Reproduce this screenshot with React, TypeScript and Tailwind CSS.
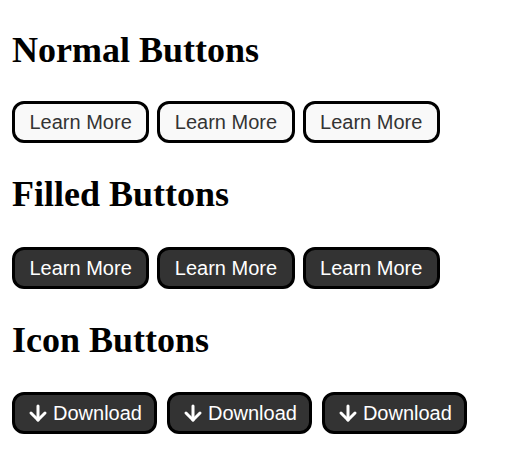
import { ArrowDown } from "lucide-react";

const serif = { fontFamily: '"Liberation Serif", "Times New Roman", serif' };

function OutlineButton({ label }: { label: string }) {
  return (
    <button className="rounded-[12px] border-[3px] border-black bg-[#f9f9f9] px-[14.5px] py-[6.5px] font-['Liberation_Sans',Arial,sans-serif] text-[20px] leading-[23px] text-[#333]">
      {label}
    </button>
  );
}

function FilledButton({ label }: { label: string }) {
  return (
    <button className="rounded-[12px] border-[3px] border-black bg-[#333] px-[14.5px] py-[6.5px] font-['Liberation_Sans',Arial,sans-serif] text-[20px] leading-[23px] text-white">
      {label}
    </button>
  );
}

function IconButton({ label }: { label: string }) {
  return (
    <button className="flex items-center gap-[3px] rounded-[12px] border-[3px] border-black bg-[#333] py-[6.5px] pl-[11px] pr-3 font-['Liberation_Sans',Arial,sans-serif] text-[20px] leading-[23px] text-white">
      <ArrowDown size={24} strokeWidth={3} className="-my-px" />
      {label}
    </button>
  );
}

export default function App() {
  const items = [1, 2, 3];

  return (
    <div className="min-h-screen bg-white px-3 pt-[30px]">
      <h2 style={serif} className="text-[36px] font-bold leading-[41px] text-black">
        Normal Buttons
      </h2>
      <div className="mt-[30px] flex gap-[8px]">
        {items.map((i) => (
          <OutlineButton key={i} label="Learn More" />
        ))}
      </div>

      <h2 style={serif} className="mt-[31px] text-[36px] font-bold leading-[41px] text-black">
        Filled Buttons
      </h2>
      <div className="mt-[32px] flex gap-[8px]">
        {items.map((i) => (
          <FilledButton key={i} label="Learn More" />
        ))}
      </div>

      <h2 style={serif} className="mt-[31px] text-[36px] font-bold leading-[41px] text-black">
        Icon Buttons
      </h2>
      <div className="mt-[31px] flex gap-[10px]">
        {items.map((i) => (
          <IconButton key={i} label="Download" />
        ))}
      </div>
    </div>
  );
}
